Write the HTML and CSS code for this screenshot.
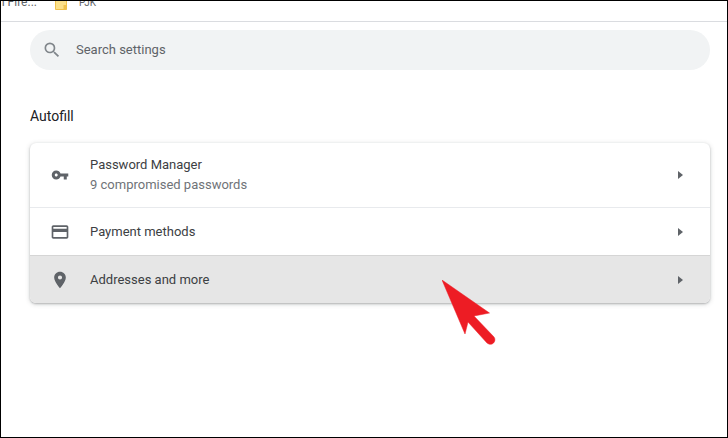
FILE: index.html
```html
<!DOCTYPE html>
<html lang="en">
<head>
<meta charset="utf-8">
<title>Autofill settings</title>
<link rel="stylesheet" href="styles.css">
</head>
<body>
<div class="frame">
  <header class="bookmarks">
    <span class="bm-text bm-first">n Fire...</span>
    <svg class="folder" width="12" height="10" viewBox="0 0 12 10"><path d="M.5 0h11v9.500H.5z" fill="#fbe08a" stroke="#f0c14b"/><path d="M8.500 5h3v4.500h-3z" fill="#f0c14b"/></svg>
    <span class="bm-text bm-last">PJK</span>
  </header>
  <main class="content">
    <div class="search">
      <svg class="search-icon" width="20" height="20" viewBox="0 0 24 24"><path fill="#80868b" d="M15.5 14h-.79l-.28-.27A6.47 6.47 0 0 0 16 9.5 6.5 6.5 0 1 0 9.5 16c1.61 0 3.09-.59 4.23-1.57l.27.28v.79l5 4.99L20.49 19l-4.99-5zm-6 0C7.01 14 5 11.99 5 9.5S7.01 5 9.5 5 14 7.01 14 9.5 11.99 14 9.5 14z"/></svg>
      <span class="search-text">Search settings</span>
    </div>
    <h2 class="heading">Autofill</h2>
    <section class="card">
      <div class="row row-tall">
        <svg class="icon" width="20" height="20" viewBox="-1.300 -1.300 26.600 26.600"><path fill="#5f6368" d="M12.65 10A5.99 5.99 0 0 0 7 6c-3.31 0-6 2.69-6 6s2.69 6 6 6a5.99 5.99 0 0 0 5.65-4H17v4h4v-4h2v-4H12.65zM7 14c-1.1 0-2-.9-2-2s.9-2 2-2 2 .9 2 2-.9 2-2 2z"/></svg>
        <div class="labels">
          <div class="label">Password Manager</div>
          <div class="sublabel">9 compromised passwords</div>
        </div>
        <span class="arrow"></span>
      </div>
      <div class="row row-mid">
        <svg class="icon" width="20" height="20" viewBox="0 0 24 24"><path fill="#5f6368" d="M20 4H4c-1.110 0-1.990.89-1.990 2L2 18c0 1.110.89 2 2 2h16c1.110 0 2-.89 2-2V6c0-1.110-.89-2-2-2zm0 14H4v-6h16v6zm0-10H4V6h16v2z"/></svg>
        <div class="labels"><div class="label">Payment methods</div></div>
        <span class="arrow"></span>
      </div>
      <div class="row row-hover">
        <svg class="icon" width="20" height="20" viewBox="0 0 24 24"><path fill="#5f6368" d="M12 2C8.130 2 5 5.130 5 9c0 5.250 7 13 7 13s7-7.750 7-13c0-3.870-3.130-7-7-7zm0 9.500a2.500 2.500 0 0 1 0-5 2.500 2.500 0 0 1 0 5z"/></svg>
        <div class="labels"><div class="label">Addresses and more</div></div>
        <span class="arrow"></span>
      </div>
    </section>
  </main>
  <svg class="pointer" width="56" height="66" viewBox="0 0 56 66"><path fill="#ed1c24" d="M0 0 L47.500 33 L32 36 L52 57 C55 61 50 67 45 63 L26 42 L23 54 Z" stroke="#ed1c24" stroke-width="0.500" stroke-linejoin="round"/></svg>
</div>
</body>
</html>
```

FILE: styles.css
```css
* { box-sizing: border-box; }
html, body { margin: 0; padding: 0; background: #fff; }
body { width: 728px; height: 438px; overflow: hidden; font-family: Roboto, "Liberation Sans", sans-serif; }
.frame { position: relative; width: 728px; height: 438px; border: 1px solid #000; overflow: hidden; background: #fff; }
.bookmarks { height: 21px; border-bottom: 1px solid #dadce0; display: flex; align-items: flex-start; overflow: hidden; margin-left: -1px; }
.bm-text { font-size: 12px; line-height: 14px; color: #5f6368; margin-top: -6px; white-space: nowrap; }
.bm-first { margin-left: -2px; }
.folder { flex: none; margin: -1px 0 0 18px; }
.bm-last { margin-left: 12px; margin-top: -5px; font-size: 10px; }
.content { padding: 8px 17px 0 29px; }
.search { height: 40px; border-radius: 20px; background: #f1f3f4; display: flex; align-items: center; padding-left: 12px; }
.search-text { margin-left: 14px; margin-top: -1px; font-size: 13px; color: #5f6368; }
.heading { margin: 38px 0 0; font-size: 14px; line-height: 17px; font-weight: 400; color: #202124; }
.card { margin-top: 18px; border-radius: 6px; background: #fff; overflow: hidden; box-shadow: 0 1px 2px rgba(60,64,67,.3), 0 1px 4px 1px rgba(60,64,67,.15); }
.row { display: flex; align-items: center; padding: 0 27px 0 20px; }
.row-tall { height: 65px; border-bottom: 1px solid #e8eaed; }
.row-mid { height: 48px; border-bottom: 1px solid #d5d5d5; }
.row-hover { height: 47px; background: #e6e6e6; }
.icon { flex: none; }
.labels { margin-left: 20px; flex: 1; }
.label { font-size: 13px; line-height: 20px; color: #3c4043; }
.sublabel { font-size: 13px; line-height: 20px; color: #6f7378; }
.arrow { width: 0; height: 0; border-left: 5px solid #5f6368; border-top: 4.500px solid transparent; border-bottom: 4.500px solid transparent; }
.pointer { position: absolute; left: 441px; top: 279px; }
```
